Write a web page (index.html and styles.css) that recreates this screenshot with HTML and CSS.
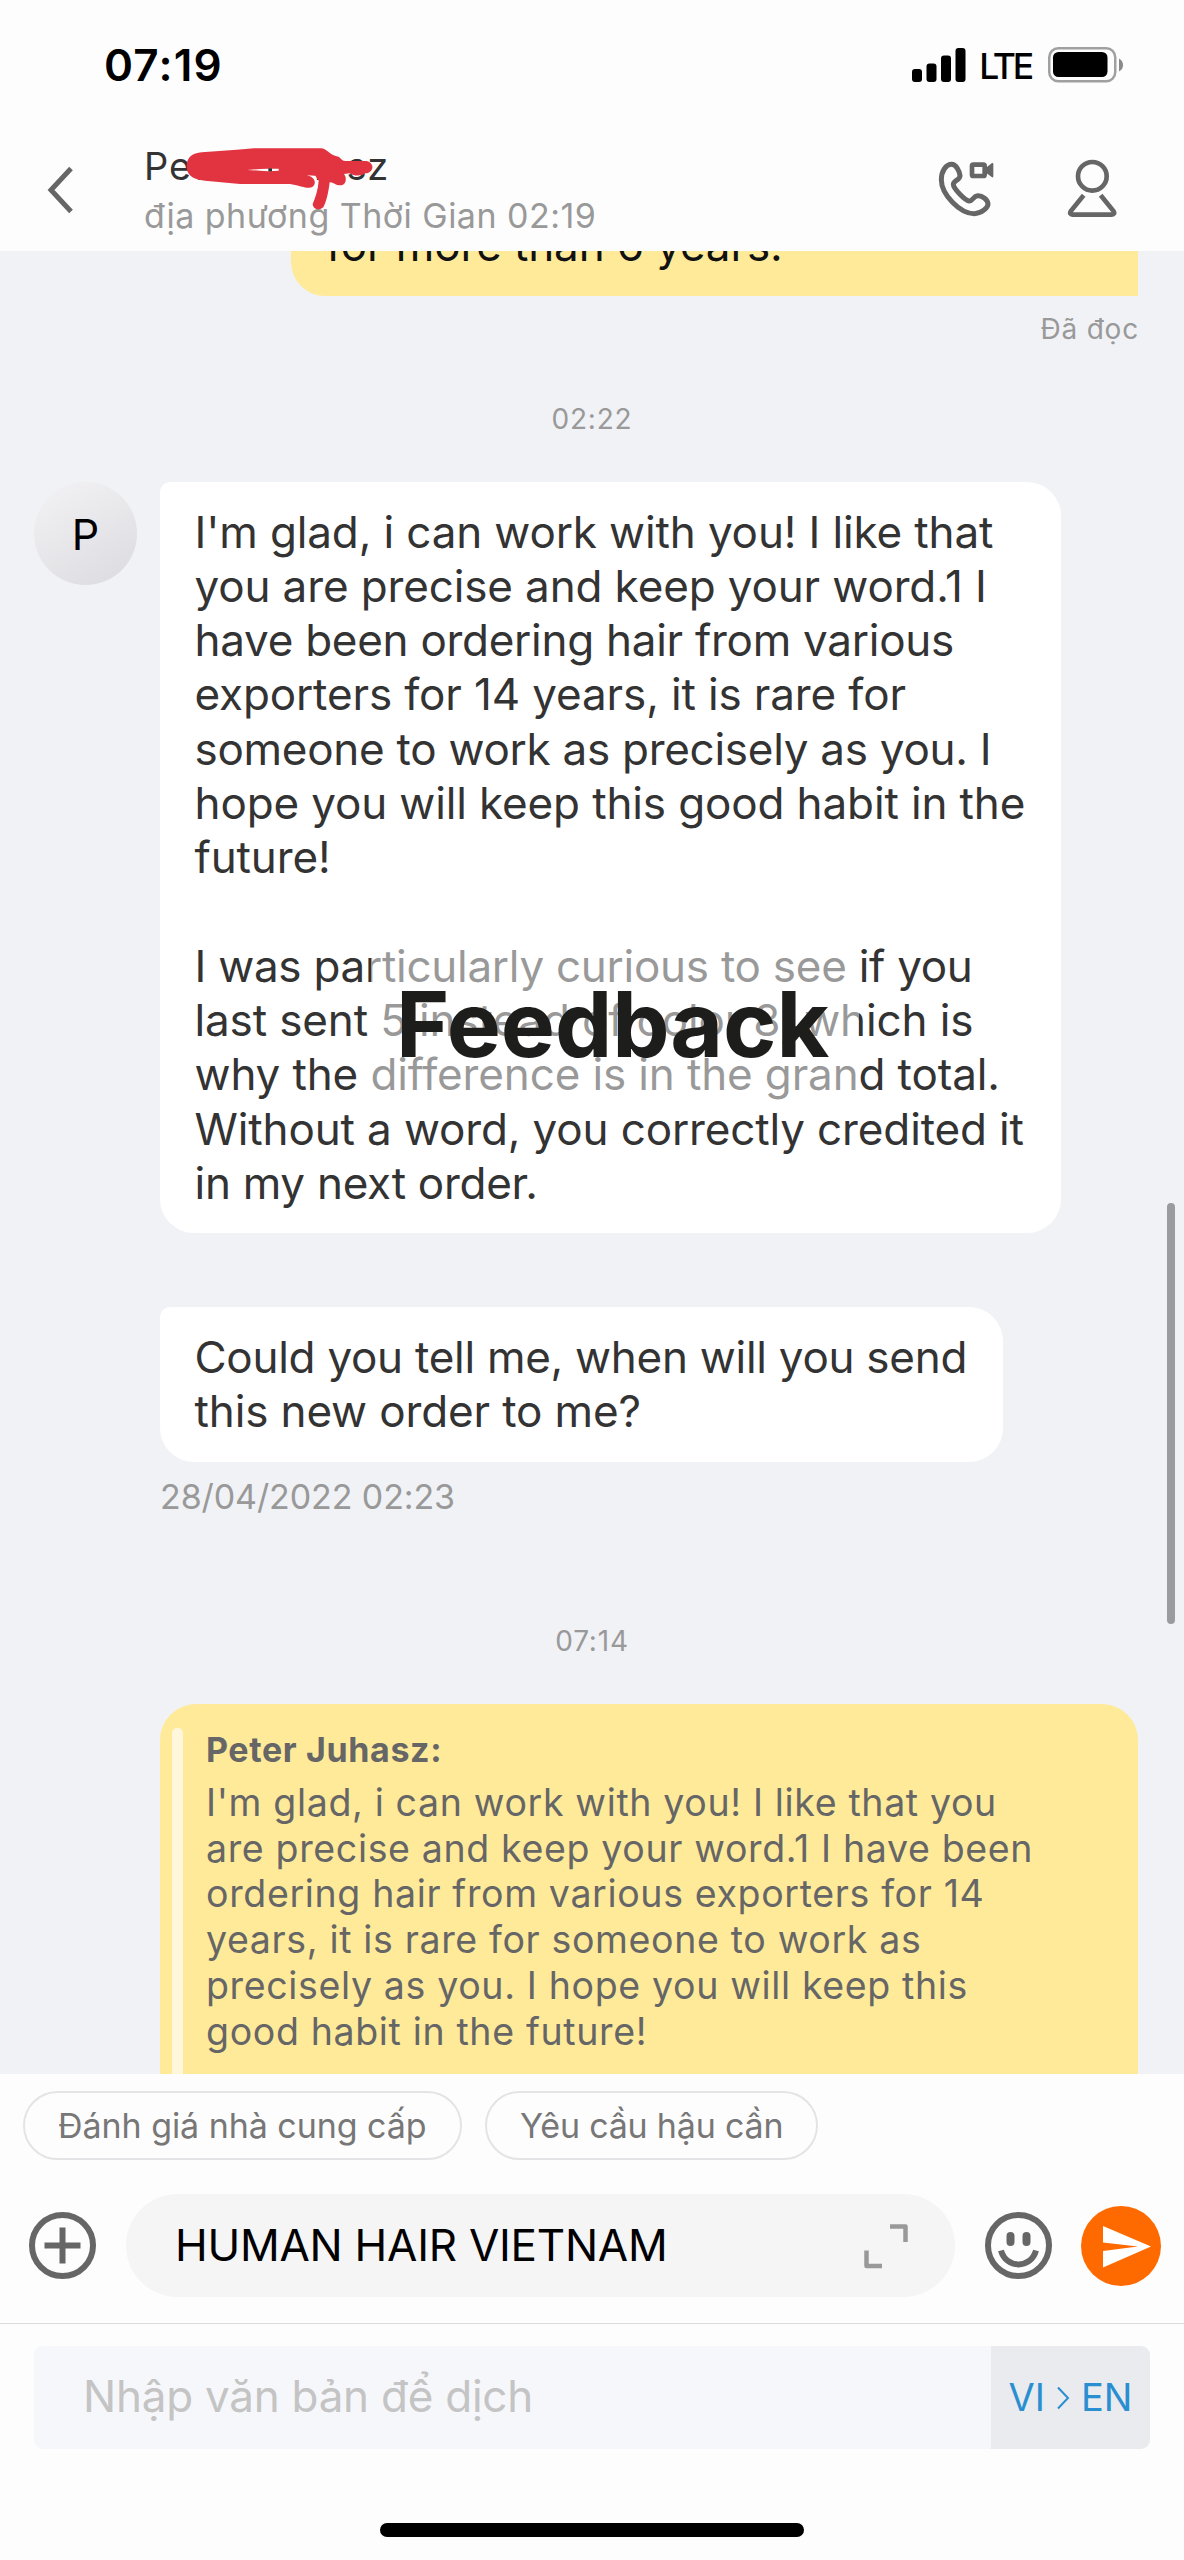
FILE: index.html
```html
<!DOCTYPE html>
<html lang="vi">
<head>
<meta charset="utf-8">
<title>Chat</title>
<link rel="stylesheet" href="styles.css">
</head>
<body>
<div class="phone">
  <div class="status">
    <span class="clock">07:19</span>
    <div class="status-right">
      <svg class="signal" width="54" height="34" viewBox="0 0 54 34"><rect x="0" y="21" width="10" height="13" rx="3"/><rect x="14.500" y="15.500" width="10" height="18.500" rx="3"/><rect x="29" y="7.500" width="10" height="26.500" rx="3"/><rect x="43.500" y="0" width="10" height="34" rx="3"/></svg>
      <span class="network">LTE</span>
      <svg class="battery" width="76" height="36" viewBox="0 0 76 36"><rect x="1.250" y="1.250" width="66" height="33" rx="9" fill="none" stroke="#a0a0a0" stroke-width="2.500"/><rect x="5" y="5" width="54.500" height="25" rx="5.500"/><path d="M71 11.500q4 2 4 6.500t-4 6.500z" fill="#8a8a8a"/></svg>
    </div>
  </div>
  <header class="header">
    <svg class="back" width="32" height="50" viewBox="0 0 32 50"><path d="M27 3.500 7 25l20 21.500" fill="none" stroke="#666" stroke-width="5"/></svg>
    <div class="contact">
      <div class="name">Peter Juhasz</div>
      <div class="local">địa phương Thời Gian 02:19</div>
      <svg class="scribble" width="280" height="120" viewBox="0 0 840 360"><path fill="#e23440" d="M170 108C170 82 188 69 215 67L320 59 372 55H572C592 55 600 78 626 80C634 86 638 94 648 93L708 93C734 97 734 127 706 130C695 138 675 140 658 130L642 132C652 144 648 166 632 166C616 166 606 154 599 157C595 190 589 215 580 232C568 243 549 238 548 222C556 202 564 180 566 152L556 137 530 136C552 140 562 158 548 170C532 180 508 165 480 162H330L225 152C185 148 170 134 170 108Z"/><path fill="#fff" d="M352 120 392 117 414 116 446 116V122L414 124 392 122Z"/><path fill="#333" d="M415 115h11v9h-11z"/></svg>
    </div>
    <svg class="call" width="57" height="59" viewBox="56 56 171 177"><path d="M97 72C80 72 66 92 66 118C66 162 122 220 165 220C185 220 206 203 206 191C206 179 189 165 175 166C161 167 162 182 149 182C137 180 102 145 102 132C102 121 122 119 122 106C120 91 110 72 97 72Z" fill="none" stroke="#666" stroke-width="15"/><rect x="158" y="73" width="38" height="34" rx="4" fill="none" stroke="#666" stroke-width="14"/><path d="M200 82 218 68Q222 67 222 72V108Q222 112 218 111L200 97Z" fill="#666"/></svg>
    <svg class="person" width="50" height="59" viewBox="442 57 150 177"><circle cx="518" cy="109" r="43" fill="none" stroke="#666" stroke-width="14"/><path d="M492 166 453 214Q448 223 459 224H576Q587 223 582 214L543 166" fill="none" stroke="#666" stroke-width="14"/></svg>
  </header>
  <main class="chat">
    <div class="bubble sent first">for more than 6 years.</div>
    <div class="read">Đã đọc</div>
    <div class="time t1">02:22</div>
    <div class="row">
      <div class="avatar">P</div>
      <div class="bubble got long">I'm glad, i can work with you! I like that<br>you are precise and keep your word.1 I<br><span class="tight">have been ordering hair from various</span><br>exporters for 14 years, it is rare for<br><span class="tight">someone to work as precisely as you. I</span><br>hope you will keep this good habit in the<br>future!<br><br><span class="tight">I was particularly curious to see if you</span><br>last sent 5 instead of color 8, which is<br>why the difference is in the grand total.<br>Without a word, you correctly credited it<br><span class="tight">in my next order.</span>
        <div class="veil"></div>
        <div class="feedback">Feedback</div>
      </div>
    </div>
    <div class="bubble got short"><span class="tight">Could you tell me, when will you send</span><br>this new order to me?</div>
    <div class="stamp">28/04/2022 02:23</div>
    <div class="time t2">07:14</div>
    <div class="bubble quote">
      <div class="bar"></div>
      <div class="quoted">
        <div class="author">Peter Juhasz:</div>
        <div class="qtext">I'm glad, i can work with you! I like that you<br>are precise and keep your word.1 I have been<br>ordering hair from various exporters for 14<br>years, it is rare for someone to work as<br>precisely as you. I hope you will keep this<br>good habit in the future!</div>
      </div>
    </div>
    <div class="scroll"></div>
  </main>
  <footer class="panel">
    <div class="chips">
      <div class="chip c1"><span>Đánh giá nhà cung cấp</span></div>
      <div class="chip c2"><span>Yêu cầu hậu cần</span></div>
    </div>
    <div class="compose">
      <svg class="plus" width="67" height="67" viewBox="0 0 67 67"><circle cx="33.500" cy="33.500" r="30.500"/><path d="M15.500 33.500h36M33.500 15.500v36"/></svg>
      <div class="input"><span>HUMAN HAIR VIETNAM</span>
        <svg width="46" height="46" viewBox="0 0 46 46"><path d="M27 3.500h15.500V19M3.500 27.500v15.500H19" fill="none" stroke="#999" stroke-width="4.500" stroke-linejoin="round"/></svg>
      </div>
      <svg class="smile" width="67" height="67" viewBox="0 0 67 67"><circle cx="33.500" cy="33.500" r="30.500"/><path d="M25.500 24v6M41.500 24v6" stroke-width="8" stroke-linecap="round"/><path d="M16 38.500C21 57 46 57 51 38.500"/></svg>
      <svg class="send" width="80" height="80" viewBox="0 0 80 80"><circle cx="40" cy="40" r="40" fill="#ff6a00"/><path d="M22 20 70 40.500 22 61.500V45L57 40.500 22 36.500Z" fill="#fff"/></svg>
    </div>
    <div class="translate">
      <div class="placeholder"><span>Nhập văn bản để dịch</span></div>
      <div class="lang"><span>VI</span><svg width="14" height="24" viewBox="0 0 14 24"><path d="M2 1.500 12 12 2 22.500" fill="none" stroke="#2a8fd0" stroke-width="2"/></svg><span>EN</span></div>
    </div>
    <div class="home"></div>
  </footer>
</div>
</body>
</html>
```
FILE: styles.css
```css
* { box-sizing: border-box; }
body { margin: 0; background: #fdfdfd; font-family: Inter, "Liberation Sans", sans-serif; }
svg { display: block; flex: none; }
.phone { width: 1184px; height: 2560px; display: flex; flex-direction: column; overflow: hidden; white-space: nowrap; }

.status { height: 130px; flex: none; display: flex; justify-content: space-between; padding: 0 60px 0 104px; }
.clock { font-size: 44px; font-weight: 600; line-height: 130px; letter-spacing: 1.200px; color: #000; }
.status-right { display: flex; height: 130px; align-items: center; }
.network { font-size: 35.500px; font-weight: 500; margin: 2px 17px 0 13px; letter-spacing: -3.200px; }

.header { height: 121px; flex: none; display: flex; align-items: flex-start; padding-left: 44px; }
.back { margin-top: 35px; }
.contact { margin-left: 68px; position: relative; width: 794px; flex: none; padding-top: 13px; }
.name { font-size: 38px; line-height: 46px; letter-spacing: .900px; color: #333; }
.local { font-size: 34px; line-height: 44px; padding-top: 5px; letter-spacing: .480px; color: #999; }
.scribble { position: absolute; left: -14px; top: 0; }
.call { margin-top: 29px; }
.person { margin: 29px 0 0 72px; }

.chat { height: 1823px; flex: none; background: #f1f2f6; position: relative; overflow: hidden; }
.bubble { font-size: 44px; line-height: 54.300px; letter-spacing: -.130px; color: #333; width: fit-content; }
.tight { letter-spacing: -.270px; }
.first { margin: -60px 46px 0 auto; width: 847px; height: 105px; padding: 27px 35px; border-radius: 0 0 0 34px; background: #ffea9a; color: #111; }
.read { margin: 16px 45px 0 0; text-align: right; font-size: 28px; line-height: 34px; letter-spacing: .800px; color: #999; }
.time { text-align: center; font-size: 28px; line-height: 34px; letter-spacing: .800px; color: #999; }
.t1 { margin-top: 56px; }
.row { display: flex; padding: 46px 0 0 34px; align-items: flex-start; }
.avatar { width: 103px; height: 103px; border-radius: 50%; background: linear-gradient(150deg, #f3f2f5, #dbdbdf); text-align: center; line-height: 105px; font-size: 43px; color: #000; flex: none; }
.got { background: #fff; padding: 22.500px 34.500px; border-radius: 10px 34px 34px 34px; }
.long { margin-left: 23px; width: 901px; height: 751px; position: relative; }
.veil { position: absolute; left: 211px; top: 464px; width: 488px; height: 166px; background: rgba(255,255,255,.5); }
.feedback { position: absolute; left: 236px; top: 486px; font-size: 91px; font-weight: 700; line-height: 112px; letter-spacing: -.100px; color: #1d1d1b; }
.short { margin: 74px 0 0 160px; width: 843px; height: 155px; padding-top: 23px; }
.stamp { margin: 14px 0 0 160px; font-size: 34px; line-height: 42px; letter-spacing: -.100px; color: #999; }
.t2 { margin-top: 106px; }
.quote { margin: 46px 0 0 160px; width: 978px; height: 460px; background: #ffea9a; border-radius: 36px 36px 0 0; display: flex; padding: 24px 12px 0; color: #666; }
.bar { width: 11px; border-radius: 5px 5px 0 0; background: #fff7dc; flex: none; }
.quoted { padding-left: 23px; }
.author { font-size: 34px; font-weight: 700; line-height: 43px; letter-spacing: .620px; }
.qtext { font-size: 37.500px; line-height: 45.700px; padding-top: 9px; letter-spacing: .650px; }
.scroll { position: absolute; left: 1167px; top: 952px; width: 8px; height: 421px; border-radius: 4px; background: #9a9b9f; }

.panel { height: 486px; flex: none; }
.chips { display: flex; gap: 23px; padding: 17px 0 0 23px; }
.chip { height: 69px; border: 2px solid #e4e4e6; border-radius: 35px; font-size: 34px; line-height: 65px; letter-spacing: -.050px; color: #777; padding-left: 33px; }
.c1 { width: 439px; }
.c2 { width: 333px; letter-spacing: -.200px; }
.compose { height: 164px; border-bottom: 1px solid #dcdcdc; display: flex; align-items: center; padding: 8px 0 0 29px; }
.plus, .smile { fill: none; stroke: #666; stroke-width: 6; }
.input { margin-left: 30px; width: 829px; height: 103px; border-radius: 52px; background: #f5f5f5; display: flex; align-items: center; justify-content: space-between; padding: 0 46px 0 49px; font-size: 44px; letter-spacing: -.250px; color: #000; }
.input span { padding-bottom: 2px; }
.smile { margin-left: 30px; }
.send { margin-left: 29px; }
.translate { margin: 22px 34px 0; height: 103px; border-radius: 9px; overflow: hidden; display: flex; background: #f6f7fa; }
.placeholder { width: 957px; padding-left: 49px; font-size: 44px; line-height: 101px; letter-spacing: -.250px; color: #c4c4c4; }
.lang { flex: 1; background: #e9ebef; display: flex; align-items: center; justify-content: center; gap: 11px; font-size: 38px; color: #2a8fd0; }
.lang span { padding-bottom: 1px; }
.home { width: 424px; height: 14px; border-radius: 7px; background: #000; margin: 74px 0 0 380px; }
```
